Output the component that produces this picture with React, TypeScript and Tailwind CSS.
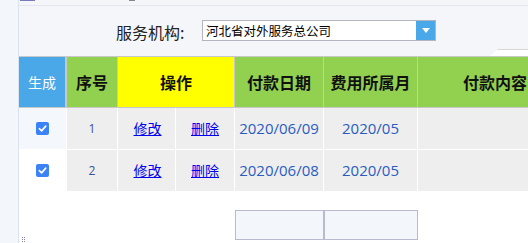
const cn = '"Noto Sans CJK SC", "Noto Sans", sans-serif';
const num = '"Open Sans", "Noto Sans CJK SC", sans-serif';

type Row = { no: string; date: string; month: string; bg: string };

const rows: Row[] = [
  { no: "1", date: "2020/06/09", month: "2020/05", bg: "bg-[#f4f7fb]" },
  { no: "2", date: "2020/06/08", month: "2020/05", bg: "bg-white" },
];

function CheckBox() {
  return (
    <span className="flex h-[13px] w-[13px] items-center justify-center rounded-[2px] bg-[#3b82f6]">
      <svg width="9" height="9" viewBox="0 0 10 10">
        <path d="M1.5 5.2 L4 7.6 L8.6 2.4" fill="none" stroke="white" strokeWidth="1.8" strokeLinecap="round" strokeLinejoin="round" />
      </svg>
    </span>
  );
}

export default function App() {
  return (
    <div className="flex h-[243px] w-[528px] overflow-hidden bg-white" style={{ fontFamily: cn }}>
      <div className="h-full w-[19px] shrink-0 border-r border-[#dde3ee] bg-[#f3f6fb]" />
      <main className="relative flex min-w-0 flex-1 flex-col">
        {/* top strip */}
        <div className="relative h-[6px] border-b border-[#e3e6ec] bg-[#f5f6f9]">
          <span className="absolute left-[1px] top-0 h-[1px] w-[15px] bg-[#7a7ab8]" />
          <span className="absolute left-[110px] top-0 h-[1px] w-[6px] bg-[#888]" />
        </div>
        <div className="relative flex h-[50px] items-start bg-[#f5f6f9] pl-[97px] pt-[14px]">
          <span className="mt-[2px] w-[86px] text-[16px] leading-[20px] text-[#222]">服务机构:</span>
          <div className="flex h-[21px] w-[234px] border border-[#b4b4c0] bg-white">
            <span className="flex-1 pl-[3px] text-[12.5px] leading-[19px] text-black">河北省对外服务总公司</span>
            <span className="flex w-[19px] items-center justify-center bg-[#4aa8e8]">
              <svg width="8" height="5" viewBox="0 0 8 5"><path d="M0 0 H8 L4 5 Z" fill="white" /></svg>
            </span>
          </div>
          <span className="absolute right-0 top-[43px] h-[7px] w-[38px] border-t border-[#d6d6d6] bg-white [clip-path:polygon(8px_0,100%_0,100%_100%,0_100%)]" />
        </div>

        {/* header */}
        <div className="flex h-[52px] gap-[1px] border-y border-[#c8c8c8] bg-[#c8c8c8] text-[16px] font-bold text-[#111]">
          <div className="flex w-[46px] items-center justify-center bg-[#4aa8e8] text-[14px] font-normal text-white">生成</div>
          <div className="ml-[1px] flex w-[50px] items-center justify-center bg-[#92d050]">序号</div>
          <div className="flex w-[116px] items-center justify-center bg-[#ffff00]">操作</div>
          <div className="flex w-[88px] items-center justify-center bg-[#92d050]">付款日期</div>
          <div className="flex w-[93px] items-center justify-center bg-[#92d050]">费用所属月</div>
          <div className="flex flex-1 items-center justify-end bg-[#92d050] pr-[1px]">付款内容</div>
        </div>

        {/* body */}
        <div className="flex flex-col gap-[1px] bg-white pb-[1px]">
          {rows.map((r) => (
            <div key={r.no} className="flex h-[41px] gap-[1px] bg-white">
              <div className={`flex w-[47px] items-center justify-center ${r.bg}`}>
                <CheckBox />
              </div>
              <div className="flex w-[50px] items-center justify-center bg-[#eeeeee] text-[12px] text-[#3b4fa8]" style={{ fontFamily: num }}>{r.no}</div>
              <div className="flex w-[57px] items-center justify-center bg-[#eeeeee] pl-[2px] text-[14px]">
                <a href="#" className="text-[#0000ee] underline">修改</a>
              </div>
              <div className="flex w-[58px] items-center justify-center bg-[#eeeeee] text-[14px]">
                <a href="#" className="text-[#0000ee] underline">删除</a>
              </div>
              <div className="flex w-[88px] items-center justify-center bg-[#eeeeee] text-[15px] text-[#2a5cc0]" style={{ fontFamily: num }}>{r.date}</div>
              <div className="flex w-[93px] items-center justify-center bg-[#eeeeee] text-[15px] text-[#2a5cc0]" style={{ fontFamily: num }}>{r.month}</div>
              <div className="flex-1 bg-[#eeeeee]" />
            </div>
          ))}
        </div>

        {/* bottom */}
        <div className="flex flex-1 items-end pb-[3px] pl-[216px]">
          <div className="h-[30px] w-[89px] border border-[#b9b9d0] bg-[#f3f6fb]" />
          <div className="h-[30px] w-[94px] border border-[#b9b9d0] bg-[#f3f6fb]" />
        </div>
        <div className="absolute bottom-[1px] left-[3px] grid grid-cols-2 gap-[1px]">
          {[0, 1, 2, 3, 4, 5].map((i) => (
            <span key={i} className="h-[1px] w-[1px] bg-[#8a8aa8]" />
          ))}
        </div>
      </main>
    </div>
  );
}
